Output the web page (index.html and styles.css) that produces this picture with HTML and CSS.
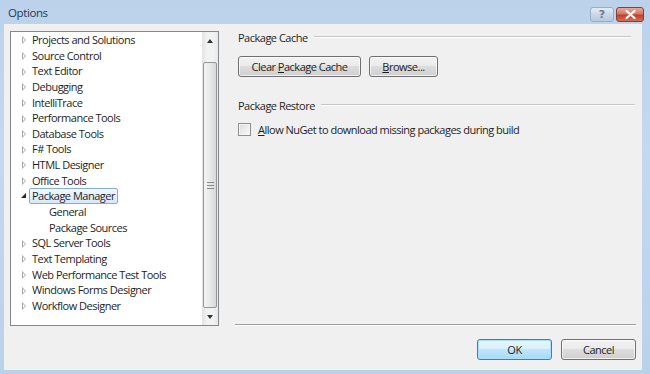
FILE: index.html
```html
<!DOCTYPE html>
<html lang="en">
<head>
  <meta charset="UTF-8" />
  <title>Options</title>
  <link rel="stylesheet" href="styles.css">
</head>
<body>
  <div class="window">
    <div class="titlebar">
      <div class="title">Options</div>
      <div class="caption-buttons">
        <div class="cap-btn help">?</div>
        <div class="cap-btn close">
          <svg width="11" height="9" viewBox="0 0 11 9"><path d="M1.5 1 L9.5 8 M9.5 1 L1.5 8" stroke="#fff" stroke-width="2.2" stroke-linecap="round"/></svg>
        </div>
      </div>
    </div>

    <div class="client">
      <div class="main">
        <div class="tree">
          <ul class="tree-list">
            <li><span class="arrow"></span>Projects and Solutions</li>
            <li><span class="arrow"></span>Source Control</li>
            <li><span class="arrow"></span>Text Editor</li>
            <li><span class="arrow"></span>Debugging</li>
            <li><span class="arrow"></span>IntelliTrace</li>
            <li><span class="arrow"></span>Performance Tools</li>
            <li><span class="arrow"></span>Database Tools</li>
            <li><span class="arrow"></span>F# Tools</li>
            <li><span class="arrow"></span>HTML Designer</li>
            <li><span class="arrow"></span>Office Tools</li>
            <li><span class="arrow open"></span><span class="selected">Package Manager</span></li>
            <li class="child">General</li>
            <li class="child">Package Sources</li>
            <li><span class="arrow"></span>SQL Server Tools</li>
            <li><span class="arrow"></span>Text Templating</li>
            <li><span class="arrow"></span>Web Performance Test Tools</li>
            <li><span class="arrow"></span>Windows Forms Designer</li>
            <li><span class="arrow"></span>Workflow Designer</li>
          </ul>
          <div class="scrollbar">
            <div class="sb-btn"><span class="sb-up"></span></div>
            <div class="sb-track">
              <div class="sb-thumb"><span class="grip"></span></div>
            </div>
            <div class="sb-btn"><span class="sb-down"></span></div>
          </div>
        </div>

        <div class="panel">
          <div class="group-header"><span>Package Cache</span></div>
          <div class="button-row">
            <button class="btn wide">Clear <u>P</u>ackage Cache</button>
            <button class="btn"><u>B</u>rowse...</button>
          </div>
          <div class="group-header restore"><span>Package Restore</span></div>
          <label class="check-row">
            <span class="checkbox"></span>
            <span><u>A</u>llow NuGet to download missing packages during build</span>
          </label>
          <div class="separator"></div>
        </div>
      </div>

      <div class="footer">
        <button class="btn default">OK</button>
        <button class="btn">Cancel</button>
      </div>
    </div>
  </div>
</body>
</html>
```

FILE: styles.css
```css
* {
  box-sizing: border-box;
}

body {
  margin: 0;
  width: 650px;
  height: 374px;
  overflow: hidden;
  font-family: 'Open Sans', 'Noto Sans', sans-serif;
  font-size: 11px;
  letter-spacing: -0.5px;
  color: #1e1e1e;
}

.window {
  width: 650px;
  height: 374px;
  background: linear-gradient(to bottom, #bcd2ea, #c4d9ef 40%, #bad1ea);
  padding: 0 8px 4px 4px;
  display: flex;
  flex-direction: column;
}

.titlebar {
  height: 24px;
  display: flex;
  align-items: flex-start;
  justify-content: space-between;
}

.title {
  padding: 5px 0 0 4px;
  font-size: 11.5px;
  letter-spacing: -0.4px;
  color: #1e395b;
}

.caption-buttons {
  display: flex;
  gap: 2px;
  margin-top: 7px;
  margin-right: -2px;
}

.cap-btn {
  height: 15px;
  border-radius: 3px;
  display: flex;
  align-items: center;
  justify-content: center;
}

.cap-btn.help {
  width: 24px;
  border: 1px solid #98adc6;
  background: linear-gradient(to bottom, #e3ecf6, #c9d7e8 50%, #b7c9de);
  color: #6a7b90;
  font-weight: bold;
  font-size: 11px;
  letter-spacing: 0;
  font-family: 'DejaVu Sans', sans-serif;
}

.cap-btn.close {
  width: 28px;
  border: 1px solid #8f3b32;
  background: linear-gradient(to bottom, #e9a99a, #d47763 45%, #c0402a 55%, #d2705d);
}

.client {
  flex: 1;
  background: #f0f0f0;
  padding: 7px 6px 9px 6px;
  display: flex;
  flex-direction: column;
}

.main {
  display: flex;
  height: 295px;
  gap: 16px;
}

.tree {
  width: 209px;
  border: 1px solid #828790;
  background: #fff;
  display: flex;
}

.tree-list {
  flex: 1;
  list-style: none;
  margin: 0;
  padding: 0;
  line-height: 15.65px;
  color: #1e1e1e;
}

.tree-list li {
  display: flex;
  align-items: center;
  height: 15.65px;
  padding-left: 10px;
  white-space: nowrap;
}

.tree-list li.child {
  padding-left: 38px;
}

.arrow {
  width: 11px;
  height: 9px;
  position: relative;
  flex-shrink: 0;
}

.arrow::before {
  content: '';
  position: absolute;
  left: 1px;
  top: 1px;
  border-left: 4px solid #a6a6a6;
  border-top: 4px solid transparent;
  border-bottom: 4px solid transparent;
}

.arrow::after {
  content: '';
  position: absolute;
  left: 2px;
  top: 3px;
  border-left: 2px solid #fff;
  border-top: 2px solid transparent;
  border-bottom: 2px solid transparent;
}

.arrow.open::before {
  left: 0;
  top: 1px;
  border: none;
  width: 0;
  height: 0;
  border-right: 5px solid #262626;
  border-top: 5px solid transparent;
}

.arrow.open::after {
  display: none;
}

.selected {
  border: 1px solid #84acdd;
  border-radius: 2px;
  background: linear-gradient(to bottom, #f2f8ff, #d6e8fd);
  padding: 0 2px;
  margin-left: -3px;
  line-height: 14px;
}

.scrollbar {
  width: 16px;
  background: linear-gradient(to right, #e3e3e3, #f2f2f2 30%, #f2f2f2 70%, #e8e8e8);
  display: flex;
  flex-direction: column;
}

.sb-btn {
  height: 17px;
  display: flex;
  align-items: center;
  justify-content: center;
}

.sb-up {
  border-bottom: 4px solid #333;
  border-left: 3px solid transparent;
  border-right: 3px solid transparent;
}

.sb-down {
  border-top: 4px solid #333;
  border-left: 3px solid transparent;
  border-right: 3px solid transparent;
}

.sb-track {
  flex: 1;
  padding: 13px 1px 0 1px;
}

.sb-thumb {
  height: 246px;
  border: 1px solid #979797;
  border-radius: 2px;
  background: linear-gradient(to right, #f4f4f4, #e8e8e8 50%, #d8d8d8);
  display: flex;
  align-items: center;
  justify-content: center;
}

.grip {
  width: 7px;
  height: 7px;
  border-top: 1px solid #8a8a8a;
  border-bottom: 1px solid #8a8a8a;
  background: linear-gradient(to bottom, transparent 2px, #8a8a8a 2px, #8a8a8a 3px, transparent 3px);
}

.panel {
  flex: 1;
  display: flex;
  flex-direction: column;
}

.group-header {
  display: flex;
  align-items: center;
  padding-left: 3px;
  margin-top: -1px;
  height: 14px;
  color: #1e1e1e;
}

.group-header::after {
  content: '';
  flex: 1;
  margin-left: 6px;
  margin-right: 5px;
  border-top: 1px solid #c6c6c6;
  border-bottom: 1px solid #fff;
}

.group-header.restore {
  margin-top: 21px;
}

.group-header.restore::after {
  margin-right: 1px;
}

.button-row {
  display: flex;
  gap: 8px;
  padding-left: 3px;
  margin-top: 12px;
}

.btn {
  height: 21px;
  width: 69px;
  border: 1px solid #707070;
  border-radius: 3px;
  background: linear-gradient(to bottom, #f2f2f2, #ebebeb 45%, #dddddd 50%, #cfcfcf);
  font-family: inherit;
  font-size: 11px;
  letter-spacing: -0.5px;
  color: #1e1e1e;
  padding: 0;
  box-shadow: inset 0 0 0 1px rgba(255, 255, 255, 0.7);
}

.btn.wide {
  width: 123px;
}

.check-row {
  display: flex;
  align-items: center;
  gap: 7px;
  padding-left: 3px;
  margin-top: 10px;
}

.checkbox {
  width: 13px;
  height: 13px;
  border: 1px solid #8e8f8f;
  background: linear-gradient(135deg, #dcdcdc, #fbfbfb);
  box-shadow: inset 0 0 0 1px #f4f4f4;
}

.separator {
  margin-top: auto;
  border-top: 1px solid #a0a0a0;
  border-bottom: 1px solid #fff;
}

.footer {
  display: flex;
  justify-content: flex-end;
  gap: 9px;
  margin-top: 13px;
}

.footer .btn {
  width: 75px;
}

.btn.default {
  border-color: #3c7fb1;
  background: linear-gradient(to bottom, #eaf6fd, #d9f0fc 45%, #bee6fd 50%, #a7d9f5);
  box-shadow: inset 0 0 0 1px #a7e1ff;
}
```
